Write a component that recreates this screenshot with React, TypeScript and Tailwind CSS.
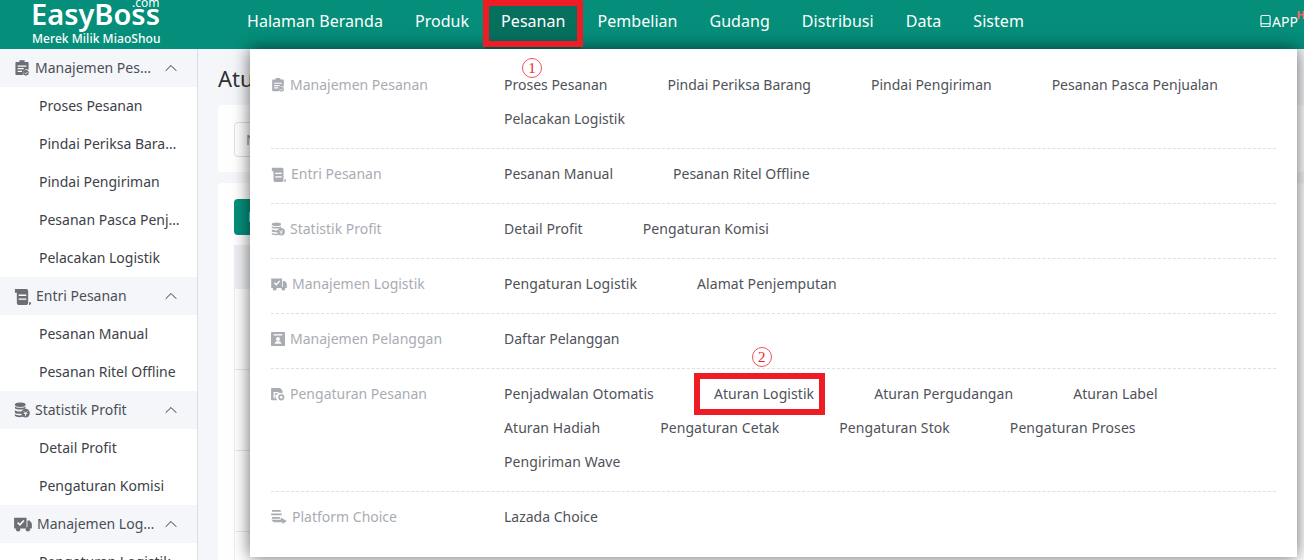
import { ChevronUp } from "lucide-react";
import type { ReactNode } from "react";

const GREEN = "bg-[#058e7a]";

const IconOrder = ({ className }: { className?: string }) => (
  <svg viewBox="0 0 16 18" className={className} fill="currentColor">
    <path d="M5 0h6v2h3.5a1 1 0 0 1 1 1v8a4.5 4.5 0 0 0-6 6H1.5a1 1 0 0 1-1-1V3a1 1 0 0 1 1-1H5z" />
    <path d="M3 6h10v1.5H3zM3 9h7v1.5H3zM3 12h5v1.5H3z" fill="#fff" />
    <circle cx="12.5" cy="14.5" r="3.2" />
    <path d="M11 14.5l1.200 1.200 2-2" stroke="#fff" fill="none" />
  </svg>
);

const IconScroll = ({ className }: { className?: string }) => (
  <svg viewBox="0 0 18 18" className={className} fill="currentColor">
    <path d="M1 1h12a2 2 0 0 1 2 2v13a2 2 0 0 1-2 2H5a2 2 0 0 1-2-2V5H1z" />
    <path d="M5 7h8v1.5H5zM5 11h8v1.5H5z" fill="#fff" />
    <path d="M16 15h2v1.5l-1 1.5h-1z" />
  </svg>
);

const IconCoins = ({ className }: { className?: string }) => (
  <svg viewBox="0 0 18 18" className={className} fill="currentColor">
    <ellipse cx="7" cy="3" rx="6" ry="2.5" />
    <path d="M1 5c1 2 11 2 12 0v2c-1 2-11 2-12 0zM1 9c1 2 7 2 8 1.5V13c-2 .6-7 .4-8-1zM1 13.5c1 1.500 6 2 8 1.200l1 1.800c-3 1-8 .6-9-1z" />
    <circle cx="13" cy="12.5" r="4.8" />
    <path d="M11 10.5l2 2 2-2M11 13h4M13 12.5V16" stroke="#fff" fill="none" />
  </svg>
);

const IconTruck = ({ className }: { className?: string }) => (
  <svg viewBox="0 0 20 18" className={className} fill="currentColor">
    <path d="M0 2h14v12H0zM15 5h2.5L20 8.5V14h-5z" />
    <circle cx="4.5" cy="15" r="2.5" />
    <circle cx="15.5" cy="15" r="2.5" />
    <path d="M4 7.5l2.5 2.5L11 5" stroke="#fff" strokeWidth="1.8" fill="none" />
  </svg>
);

const IconContact = ({ className }: { className?: string }) => (
  <svg viewBox="0 0 16 16" className={className} fill="currentColor">
    <path d="M1 0h14a1 1 0 0 1 1 1v14a1 1 0 0 1-1 1H1a1 1 0 0 1-1-1V1a1 1 0 0 1 1-1z" />
    <path d="M3 2.5h10V4H3z" fill="#fff" />
    <circle cx="8" cy="8" r="2.2" fill="#fff" />
    <path d="M4 13.5c.5-2.500 2-3 4-3s3.500.5 4 3z" fill="#fff" />
  </svg>
);

const IconSetting = ({ className }: { className?: string }) => (
  <svg viewBox="0 0 17 16" className={className} fill="currentColor">
    <path d="M1 0h10l3 3v4a4.5 4.5 0 0 0-6 8H1a1 1 0 0 1-1-1V1a1 1 0 0 1 1-1z" />
    <path d="M3 5h6v1.5H4.5V9H8v1.5H4.5V13H3z" fill="#fff" />
    <circle cx="12.5" cy="11.5" r="2.8" fill="none" stroke="currentColor" strokeWidth="2" />
  </svg>
);

const IconChoice = ({ className }: { className?: string }) => (
  <svg viewBox="0 0 18 16" className={className} fill="currentColor">
    <path d="M1 0h10v2H1zM0 4h12v2H0zM1 8h9v2H1z" />
    <path d="M0 11h11V8.500l7 4-5 3.500v-2H3z" />
  </svg>
);

const AppIcon = () => (
  <svg viewBox="0 0 12 14" className="w-[11px] h-[14px]" fill="none" stroke="#fff" strokeWidth="1.2">
    <rect x="1" y="1" width="10" height="12" rx="1.5" />
    <path d="M1 10h10" />
  </svg>
);

type SideSection = { title: string; icon: ReactNode; items: string[]; gap: string };

const sideSections: SideSection[] = [
  {
    title: "Manajemen Pesanan",
    icon: <IconOrder className="w-[14px] h-[16px] ml-[1px]" />,
    gap: "ml-[6px]",
    items: ["Proses Pesanan", "Pindai Periksa Barang", "Pindai Pengiriman", "Pesanan Pasca Penjualan", "Pelacakan Logistik"],
  },
  {
    title: "Entri Pesanan",
    icon: <IconScroll className="w-[17px] h-[17px]" />,
    gap: "ml-[5px]",
    items: ["Pesanan Manual", "Pesanan Ritel Offline"],
  },
  {
    title: "Statistik Profit",
    icon: <IconCoins className="w-[16px] h-[16px]" />,
    gap: "ml-[5px]",
    items: ["Detail Profit", "Pengaturan Komisi"],
  },
  {
    title: "Manajemen Logistik",
    icon: <IconTruck className="w-[18px] h-[16px]" />,
    gap: "ml-[5px]",
    items: ["Pengaturan Logistik"],
  },
];

const navItems = ["Halaman Beranda", "Produk", "Pesanan", "Pembelian", "Gudang", "Distribusi", "Data", "Sistem"];

type MenuGroup = { title: string; icon: ReactNode; rows: string[][]; wide?: boolean };

const menuGroups: MenuGroup[] = [
  {
    title: "Manajemen Pesanan",
    icon: <IconOrder className="w-[14px] h-[14px]" />,
    rows: [["Proses Pesanan", "Pindai Periksa Barang", "Pindai Pengiriman", "Pesanan Pasca Penjualan"], ["Pelacakan Logistik"]],
  },
  {
    title: "Entri Pesanan",
    icon: <IconScroll className="w-[15px] h-[15px]" />,
    rows: [["Pesanan Manual", "Pesanan Ritel Offline"]],
  },
  {
    title: "Statistik Profit",
    icon: <IconCoins className="w-[14px] h-[14px]" />,
    rows: [["Detail Profit", "Pengaturan Komisi"]],
    wide: true,
  },
  {
    title: "Manajemen Logistik",
    icon: <IconTruck className="w-[16px] h-[14px]" />,
    rows: [["Pengaturan Logistik", "Alamat Penjemputan"]],
    wide: true,
  },
  {
    title: "Manajemen Pelanggan",
    icon: <IconContact className="w-[14px] h-[14px]" />,
    rows: [["Daftar Pelanggan"]],
  },
  {
    title: "Pengaturan Pesanan",
    icon: <IconSetting className="w-[14px] h-[13px]" />,
    rows: [
      ["Penjadwalan Otomatis", "Aturan Logistik", "Aturan Pergudangan", "Aturan Label"],
      ["Aturan Hadiah", "Pengaturan Cetak", "Pengaturan Stok", "Pengaturan Proses"],
      ["Pengiriman Wave"],
    ],
    wide: true,
  },
  {
    title: "Platform Choice",
    icon: <IconChoice className="w-[16px] h-[14px]" />,
    rows: [["Lazada Choice"]],
  },
];

// hand-drawn annotation number on the screenshot
const Mark = ({ n, className }: { n: string; className: string }) => (
  <div
    className={`absolute w-[20px] h-[20px] rounded-full border border-[#f0525a] text-[#ee1c25] text-center text-[15px] leading-[18px] font-['Liberation_Serif',serif] ${className}`}
  >
    {n}
  </div>
);

const Header = () => (
  <header className={`${GREEN} h-[49px] flex items-stretch text-white relative shrink-0 overflow-hidden`}>
    <div className="w-[231px] shrink-0 pl-[32px] relative">
      <div className="text-[29px] leading-[30px] font-semibold mt-[-1px] ml-[-1px]">EasyBoss</div>
      <div className="absolute left-[132px] top-[-3px] text-[12px] leading-[12px]">.com</div>
      <div className="text-[12px] leading-[16px] mt-[2px] font-medium tracking-[0.05px]">Merek Milik MiaoShou</div>
    </div>
    <nav className="flex flex-1 tracking-[0.04px]">
      {navItems.map((item) => (
        <div
          key={item}
          className={`text-[16px] leading-[42px] px-[16px] h-[49px] ${item === "Pesanan" ? "bg-[#06705f]" : ""}`}
        >
          {item}
        </div>
      ))}
    </nav>
    <div className="flex items-center pr-[6px] h-[42px] text-[14px] relative">
      <AppIcon />
      <span className="ml-[1px]">APP</span>
      <span className="absolute right-[-1px] top-[9px] text-[11px] leading-[11px] font-bold text-[#f56c6c]">H</span>
    </div>
  </header>
);

const Sidebar = () => (
  <aside className="w-[198px] shrink-0 border-r border-[#dcdfe6] bg-white overflow-hidden">
    {sideSections.map((section) => (
      <div key={section.title}>
        <div className="h-[38px] bg-[#f5f6fa] flex items-center pl-[14px] pr-[16px] text-[#4a4f57]">
          <span className="text-[#6b6e75] flex">{section.icon}</span>
          <span className={`${section.gap} text-[14px] leading-[20px] truncate flex-1`}>{section.title}</span>
          <ChevronUp className="w-[20px] h-[20px] ml-[5px] shrink-0 text-[#333]" strokeWidth={1.2} />
        </div>
        {section.items.map((item) => (
          <div key={item} className="h-[38px] leading-[38px] pl-[39px] pr-[15px] text-[14px] text-[#3d4148] truncate">
            {item}
          </div>
        ))}
      </div>
    ))}
  </aside>
);

// the page behind the open menu, only its left edge shows
const PageBehind = () => (
  <main className="flex-1 bg-[#f5f6fa] pl-[20px] overflow-hidden">
    <h1 className="text-[22px] leading-[30px] mt-[14px] text-[#303133]">Aturan Logistik</h1>
    <div className="bg-white rounded-[4px] h-[67px] mt-[12px] px-[16px] pt-[17px]">
      <div className="h-[35px] w-[200px] border border-[#dcdfe6] rounded-[4px] px-[11px] text-[14px] leading-[33px] text-[#8a8d93]">
        Nama
      </div>
    </div>
    <div className="bg-white rounded-[4px] mt-[11px] px-[16px] pt-[16px] h-[400px]">
      <div className="h-[36px] w-[120px] bg-[#058e7a] rounded-[4px] px-[14px] text-[14px] leading-[36px] text-white">
        Buat
      </div>
      <div className="mt-[10px] border-l border-[#ebeef5]">
        <div className="h-[44px] bg-[#eff0f3]" />
        <div className="h-[81px] border-b border-[#e4e7ed]" />
        <div className="h-[81px] border-b border-[#e4e7ed]" />
        <div className="h-[81px] border-b border-[#e4e7ed]" />
        <div className="flex text-[14px] leading-[20px] text-[#606266] pt-[24px]">
          <span className="w-[132px] pl-[49px]">4</span>
          <span>test-rer-2</span>
        </div>
      </div>
    </div>
  </main>
);

const MenuLink = ({ label, wide }: { label: string; wide?: boolean }) => {
  const marked = label === "Aturan Logistik";
  return (
    <div
      className={`relative mr-[60px] text-[14px] leading-[34px] text-[#4f5259] whitespace-nowrap ${wide ? "tracking-[0.07px]" : ""}`}
    >
      {label}
      {marked && (
        <>
          <div className="absolute left-[-20px] right-[-11px] top-[-4px] bottom-[-4px] border-[6px] border-[#ee1c25]" />
          <Mark n="2" className="left-[38px] top-[-30px]" />
        </>
      )}
    </div>
  );
};

const DropMenu = () => (
  <div className="absolute left-[250px] top-[49px] w-[1047px] h-[508px] bg-white shadow-[0_0_16px_rgba(0,0,0,0.6)] px-[21px] pt-[19px]">
    <Mark n="1" className="left-[272px] top-[9px]" />
    {menuGroups.map((group, i) => (
      <div
        key={group.title}
        className={`flex pb-[12px] mb-[8px] ${i < menuGroups.length - 1 ? "border-b border-dashed border-[#dcdfe6]" : ""}`}
      >
        <div className="w-[233px] shrink-0 flex items-center h-[34px] text-[14px] leading-[20px] text-[#a9acb3]">
          <span className="flex">{group.icon}</span>
          <span className="ml-[5px]">{group.title}</span>
        </div>
        <div className="flex-1">
          {group.rows.map((row) => (
            <div key={row[0]} className="flex">
              {row.map((label) => (
                <MenuLink key={label} label={label} wide={group.wide} />
              ))}
            </div>
          ))}
        </div>
      </div>
    ))}
  </div>
);

export default function App() {
  return (
    <div className="w-[1304px] h-[560px] relative overflow-hidden flex flex-col font-['Noto_Sans','Open_Sans',sans-serif]">
      <Header />
      <div className="flex flex-1 min-h-0">
        <Sidebar />
        <PageBehind />
      </div>
      <DropMenu />
      {/* red mark round the open nav item */}
      <div className="absolute left-[483px] top-0 w-[100px] h-[47px] border-[6px] border-[#ee1c25]" />
    </div>
  );
}
